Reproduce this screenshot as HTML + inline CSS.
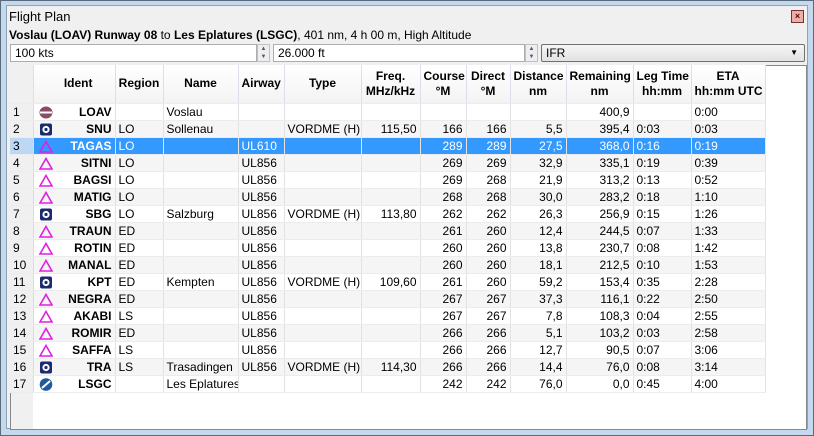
<!DOCTYPE html>
<html><head><style>
*{box-sizing:border-box;margin:0;padding:0}
body{width:814px;height:436px;overflow:hidden;background:#c4d8ee;font-family:"Liberation Sans",sans-serif;font-size:12px;color:#000;position:relative}
.frame{position:absolute;left:0;top:0;width:814px;height:436px;border:1px solid #5b6b7e}
.panel{position:absolute;left:6px;top:5px;width:802px;height:424px;background:#f0f0f0;border:1px solid #8ea2b8}
.t{position:absolute;white-space:nowrap}
.inp{position:absolute;top:44px;height:18px;background:#fff;border:1px solid #abadb3;padding:1px 4px;font-size:12px;line-height:14px}
.spin{position:absolute;top:44px;width:13px;height:18px;background:#eee;border:1px solid #c0c0c0;font-size:6px;line-height:8px;text-align:center;color:#557}
table{position:absolute;left:10px;top:65px;width:755px;border-collapse:collapse;table-layout:fixed}
td,th{height:17px;line-height:16px;padding:0 3px;white-space:nowrap;overflow:hidden;border-right:1px solid #e2e2e2;border-bottom:1px solid #ececec;font-size:12px}
th{height:38px;font-weight:bold;text-align:center;line-height:15px;background:linear-gradient(#fff,#f3f3f3);border-right:1px solid #dde}
td.n{background:#f0f0f0;text-align:left;padding-left:3px;border-right:1px solid #dcdcdc}
td.r{text-align:right}
td.id{font-weight:bold;text-align:right;position:relative}
tr.e td{background:#f5f5f5}
tr.e td.n{background:#f0f0f0}
tr.s td{background:#3399ff;color:#fff}
tr.s td.n{background:#bcd8f5;color:#000}
.ic{position:absolute;left:5px;top:2px;width:14px;height:13px}
.box{position:absolute;left:10px;top:65px;width:797px;height:365px;background:#fff;border:1px solid #828790}
</style></head><body>
<div class="frame"></div>
<div class="panel"></div>
<div class="t" style="left:9px;top:9px;font-size:13px">Flight Plan</div>
<div style="position:absolute;left:791px;top:10px;width:13px;height:13px;border:1px solid #7a3030;background:#e8b0a8;font-size:9px;line-height:11px;text-align:center;color:#600;font-weight:bold">×</div>
<div class="t" style="left:9px;top:28px;font-size:12px"><b>Voslau (LOAV) Runway 08</b> to <b>Les Eplatures (LSGC)</b>, 401 nm, 4 h 00 m, High Altitude</div>
<div class="inp" style="left:10px;width:247px">100 kts</div>
<div class="spin" style="left:257px">▲<br>▼</div>
<div class="inp" style="left:273px;width:252px">26.000 ft</div>
<div class="spin" style="left:525px">▲<br>▼</div>
<div class="inp" style="left:541px;width:264px;background:linear-gradient(#f6f6f6,#e2e2e2);border-color:#707070;border-radius:2px">IFR<span style="position:absolute;right:6px;top:1px;font-size:8px">▼</span></div>
<div class="box"></div>
<svg width="0" height="0" style="position:absolute"><defs>
<g id="tri"><path d="M7 1.5 L13 12 L1 12 Z" fill="none" stroke="#e020e0" stroke-width="1.6"/></g>
<g id="vor"><rect x="1" y="0.5" width="12" height="12" rx="2" fill="#1c2a6e"/><circle cx="7" cy="6.5" r="3.6" fill="#fff"/><circle cx="7" cy="6.5" r="1.6" fill="#1c2a6e"/></g>
</defs></svg>
<table>
<colgroup><col style="width:23px"><col style="width:82px"><col style="width:48px"><col style="width:75px"><col style="width:46px"><col style="width:77px"><col style="width:59px"><col style="width:46px"><col style="width:44px"><col style="width:56px"><col style="width:67px"><col style="width:58px"><col style="width:74px"></colgroup>
<tr><th style="background:#f0f0f0"></th><th style="text-align:right;padding-right:22px">Ident</th><th>Region</th><th>Name</th><th>Airway</th><th>Type</th><th>Freq.<br>MHz/kHz</th><th>Course<br>°M</th><th>Direct<br>°M</th><th>Distance<br>nm</th><th>Remaining<br>nm</th><th>Leg Time<br>hh:mm</th><th>ETA<br>hh:mm UTC</th></tr>
<tr><td class="n">1</td><td class="id"><svg class="ic"><ellipse cx="7" cy="6.5" rx="6.5" ry="6" fill="#8a4a68"/><rect x="1" y="5.5" width="12" height="2" fill="#fff"/></svg>LOAV</td><td></td><td>Voslau</td><td></td><td></td><td></td><td></td><td></td><td></td><td class="r">400,9</td><td></td><td>0:00</td></tr>
<tr class="e"><td class="n">2</td><td class="id"><svg class="ic"><use href="#vor"/></svg>SNU</td><td>LO</td><td>Sollenau</td><td></td><td>VORDME (H)</td><td class="r">115,50</td><td class="r">166</td><td class="r">166</td><td class="r">5,5</td><td class="r">395,4</td><td>0:03</td><td>0:03</td></tr>
<tr class="s"><td class="n">3</td><td class="id"><svg class="ic"><use href="#tri"/></svg>TAGAS</td><td>LO</td><td></td><td>UL610</td><td></td><td></td><td class="r">289</td><td class="r">289</td><td class="r">27,5</td><td class="r">368,0</td><td>0:16</td><td>0:19</td></tr>
<tr class="e"><td class="n">4</td><td class="id"><svg class="ic"><use href="#tri"/></svg>SITNI</td><td>LO</td><td></td><td>UL856</td><td></td><td></td><td class="r">269</td><td class="r">269</td><td class="r">32,9</td><td class="r">335,1</td><td>0:19</td><td>0:39</td></tr>
<tr><td class="n">5</td><td class="id"><svg class="ic"><use href="#tri"/></svg>BAGSI</td><td>LO</td><td></td><td>UL856</td><td></td><td></td><td class="r">269</td><td class="r">268</td><td class="r">21,9</td><td class="r">313,2</td><td>0:13</td><td>0:52</td></tr>
<tr class="e"><td class="n">6</td><td class="id"><svg class="ic"><use href="#tri"/></svg>MATIG</td><td>LO</td><td></td><td>UL856</td><td></td><td></td><td class="r">268</td><td class="r">268</td><td class="r">30,0</td><td class="r">283,2</td><td>0:18</td><td>1:10</td></tr>
<tr><td class="n">7</td><td class="id"><svg class="ic"><use href="#vor"/></svg>SBG</td><td>LO</td><td>Salzburg</td><td>UL856</td><td>VORDME (H)</td><td class="r">113,80</td><td class="r">262</td><td class="r">262</td><td class="r">26,3</td><td class="r">256,9</td><td>0:15</td><td>1:26</td></tr>
<tr class="e"><td class="n">8</td><td class="id"><svg class="ic"><use href="#tri"/></svg>TRAUN</td><td>ED</td><td></td><td>UL856</td><td></td><td></td><td class="r">261</td><td class="r">260</td><td class="r">12,4</td><td class="r">244,5</td><td>0:07</td><td>1:33</td></tr>
<tr><td class="n">9</td><td class="id"><svg class="ic"><use href="#tri"/></svg>ROTIN</td><td>ED</td><td></td><td>UL856</td><td></td><td></td><td class="r">260</td><td class="r">260</td><td class="r">13,8</td><td class="r">230,7</td><td>0:08</td><td>1:42</td></tr>
<tr class="e"><td class="n">10</td><td class="id"><svg class="ic"><use href="#tri"/></svg>MANAL</td><td>ED</td><td></td><td>UL856</td><td></td><td></td><td class="r">260</td><td class="r">260</td><td class="r">18,1</td><td class="r">212,5</td><td>0:10</td><td>1:53</td></tr>
<tr><td class="n">11</td><td class="id"><svg class="ic"><use href="#vor"/></svg>KPT</td><td>ED</td><td>Kempten</td><td>UL856</td><td>VORDME (H)</td><td class="r">109,60</td><td class="r">261</td><td class="r">260</td><td class="r">59,2</td><td class="r">153,4</td><td>0:35</td><td>2:28</td></tr>
<tr class="e"><td class="n">12</td><td class="id"><svg class="ic"><use href="#tri"/></svg>NEGRA</td><td>ED</td><td></td><td>UL856</td><td></td><td></td><td class="r">267</td><td class="r">267</td><td class="r">37,3</td><td class="r">116,1</td><td>0:22</td><td>2:50</td></tr>
<tr><td class="n">13</td><td class="id"><svg class="ic"><use href="#tri"/></svg>AKABI</td><td>LS</td><td></td><td>UL856</td><td></td><td></td><td class="r">267</td><td class="r">267</td><td class="r">7,8</td><td class="r">108,3</td><td>0:04</td><td>2:55</td></tr>
<tr class="e"><td class="n">14</td><td class="id"><svg class="ic"><use href="#tri"/></svg>ROMIR</td><td>ED</td><td></td><td>UL856</td><td></td><td></td><td class="r">266</td><td class="r">266</td><td class="r">5,1</td><td class="r">103,2</td><td>0:03</td><td>2:58</td></tr>
<tr><td class="n">15</td><td class="id"><svg class="ic"><use href="#tri"/></svg>SAFFA</td><td>LS</td><td></td><td>UL856</td><td></td><td></td><td class="r">266</td><td class="r">266</td><td class="r">12,7</td><td class="r">90,5</td><td>0:07</td><td>3:06</td></tr>
<tr class="e"><td class="n">16</td><td class="id"><svg class="ic"><use href="#vor"/></svg>TRA</td><td>LS</td><td>Trasadingen</td><td>UL856</td><td>VORDME (H)</td><td class="r">114,30</td><td class="r">266</td><td class="r">266</td><td class="r">14,4</td><td class="r">76,0</td><td>0:08</td><td>3:14</td></tr>
<tr><td class="n">17</td><td class="id"><svg class="ic"><circle cx="7" cy="6.5" r="6.3" fill="#1f5a9a"/><path d="M3 10 L11 3" stroke="#fff" stroke-width="2"/></svg>LSGC</td><td></td><td>Les Eplatures</td><td></td><td></td><td></td><td class="r">242</td><td class="r">242</td><td class="r">76,0</td><td class="r">0,0</td><td>0:45</td><td>4:00</td></tr>
</table>
<div style="position:absolute;left:11px;top:393px;width:22px;height:36px;background:#f0f0f0"></div>
</body></html>
